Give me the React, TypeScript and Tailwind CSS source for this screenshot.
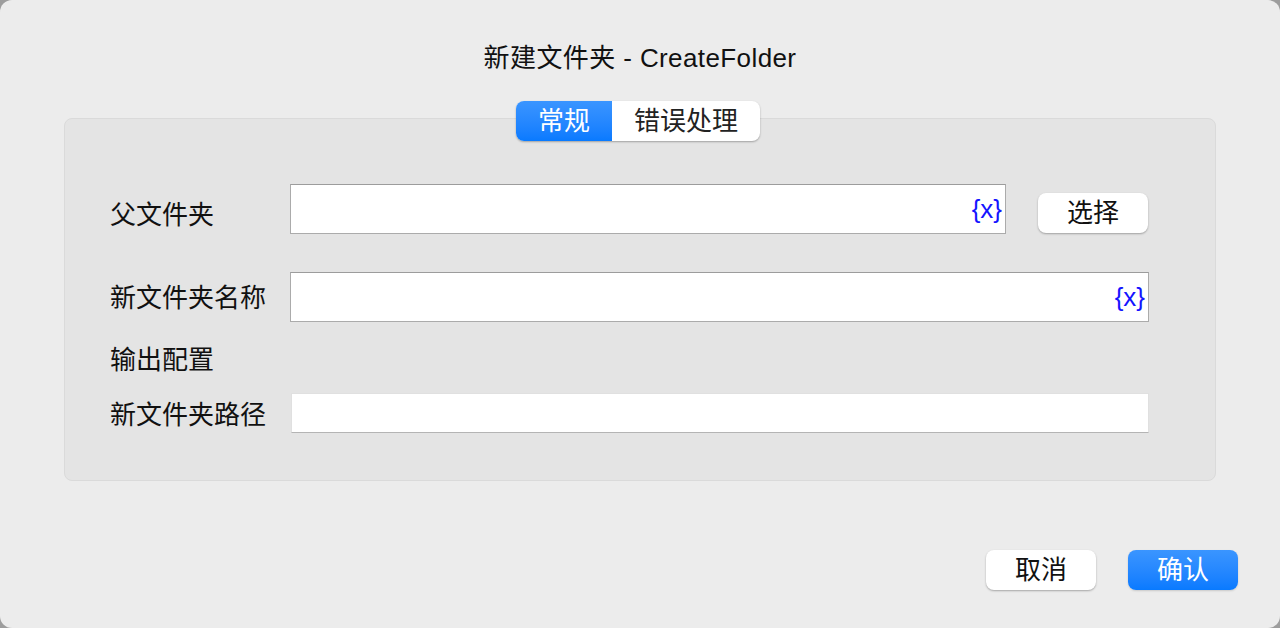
import React from 'react'

const font = { fontFamily: '"Liberation Sans", "Noto Sans CJK SC", sans-serif' }

function VarInput({ className = '' }: { className?: string }) {
  return (
    <div
      className={`flex h-[50px] items-center justify-end border border-[#ababab] border-t-[#9c9c9c] bg-white pr-[3px] ${className}`}
    >
      <span className="text-[26px] leading-none text-[#1414ff]">{'{x}'}</span>
    </div>
  )
}

export default function App() {
  return (
    <div className="h-[628px] w-[1280px] bg-[#9d9d9d]" style={font}>
      <div className="flex h-full flex-col rounded-[12px] bg-[#ececec] text-[#111]">
        <h1 className="pt-[40px] text-center text-[26px] leading-[36px] font-normal tracking-[0.4px] text-[#111]">
          新建文件夹 - CreateFolder
        </h1>

        <div className="relative z-10 mt-[25px] flex justify-center pr-[4px]">
          <div className="flex h-[40px] overflow-hidden rounded-[8px] bg-white shadow-[0_1px_2px_rgba(0,0,0,0.3)]">
            <div className="flex w-[96px] items-center justify-center bg-gradient-to-b from-[#3a95ff] to-[#087aff] text-[26px] text-white">
              常规
            </div>
            <div className="flex w-[148px] items-center justify-center text-[26px] text-[#222]">
              错误处理
            </div>
          </div>
        </div>

        <div className="mx-[64px] mt-[-23px] h-[363px] rounded-[8px] border border-[#dadada] bg-[#e4e4e4] pt-[65px] pr-[66px] pl-[45px]">
          <div className="flex items-center">
            <div className="w-[180px] pt-[11px] text-[26px] leading-[36px]">父文件夹</div>
            <VarInput className="w-[716px]" />
            <button className="ml-[32px] mt-[8px] h-[40px] w-[110px] rounded-[8px] bg-white text-[26px] shadow-[0_1px_2px_rgba(0,0,0,0.3)]">
              选择
            </button>
          </div>

          <div className="mt-[38px] flex items-center">
            <div className="w-[180px] pt-[2px] text-[26px] leading-[36px]">新文件夹名称</div>
            <VarInput className="flex-1" />
          </div>

          <div className="mt-[20px] text-[26px] leading-[36px]">输出配置</div>

          <div className="mt-[15px] flex items-center">
            <div className="w-[181px] pt-[4px] text-[26px] leading-[36px]">新文件夹路径</div>
            <div className="h-[40px] flex-1 border border-[#e0e0e0] border-b-[#b4b4b4] bg-white" />
          </div>
        </div>

        <div className="mt-[69px] flex justify-end gap-[32px] pr-[42px]">
          <button className="h-[40px] w-[110px] rounded-[8px] bg-white text-[26px] text-[#111] shadow-[0_1px_2px_rgba(0,0,0,0.3)]">
            取消
          </button>
          <button className="h-[40px] w-[110px] rounded-[8px] bg-gradient-to-b from-[#3a95ff] to-[#087aff] text-[26px] text-white shadow-[0_1px_2px_rgba(0,0,0,0.15)]">
            确认
          </button>
        </div>
      </div>
    </div>
  )
}
